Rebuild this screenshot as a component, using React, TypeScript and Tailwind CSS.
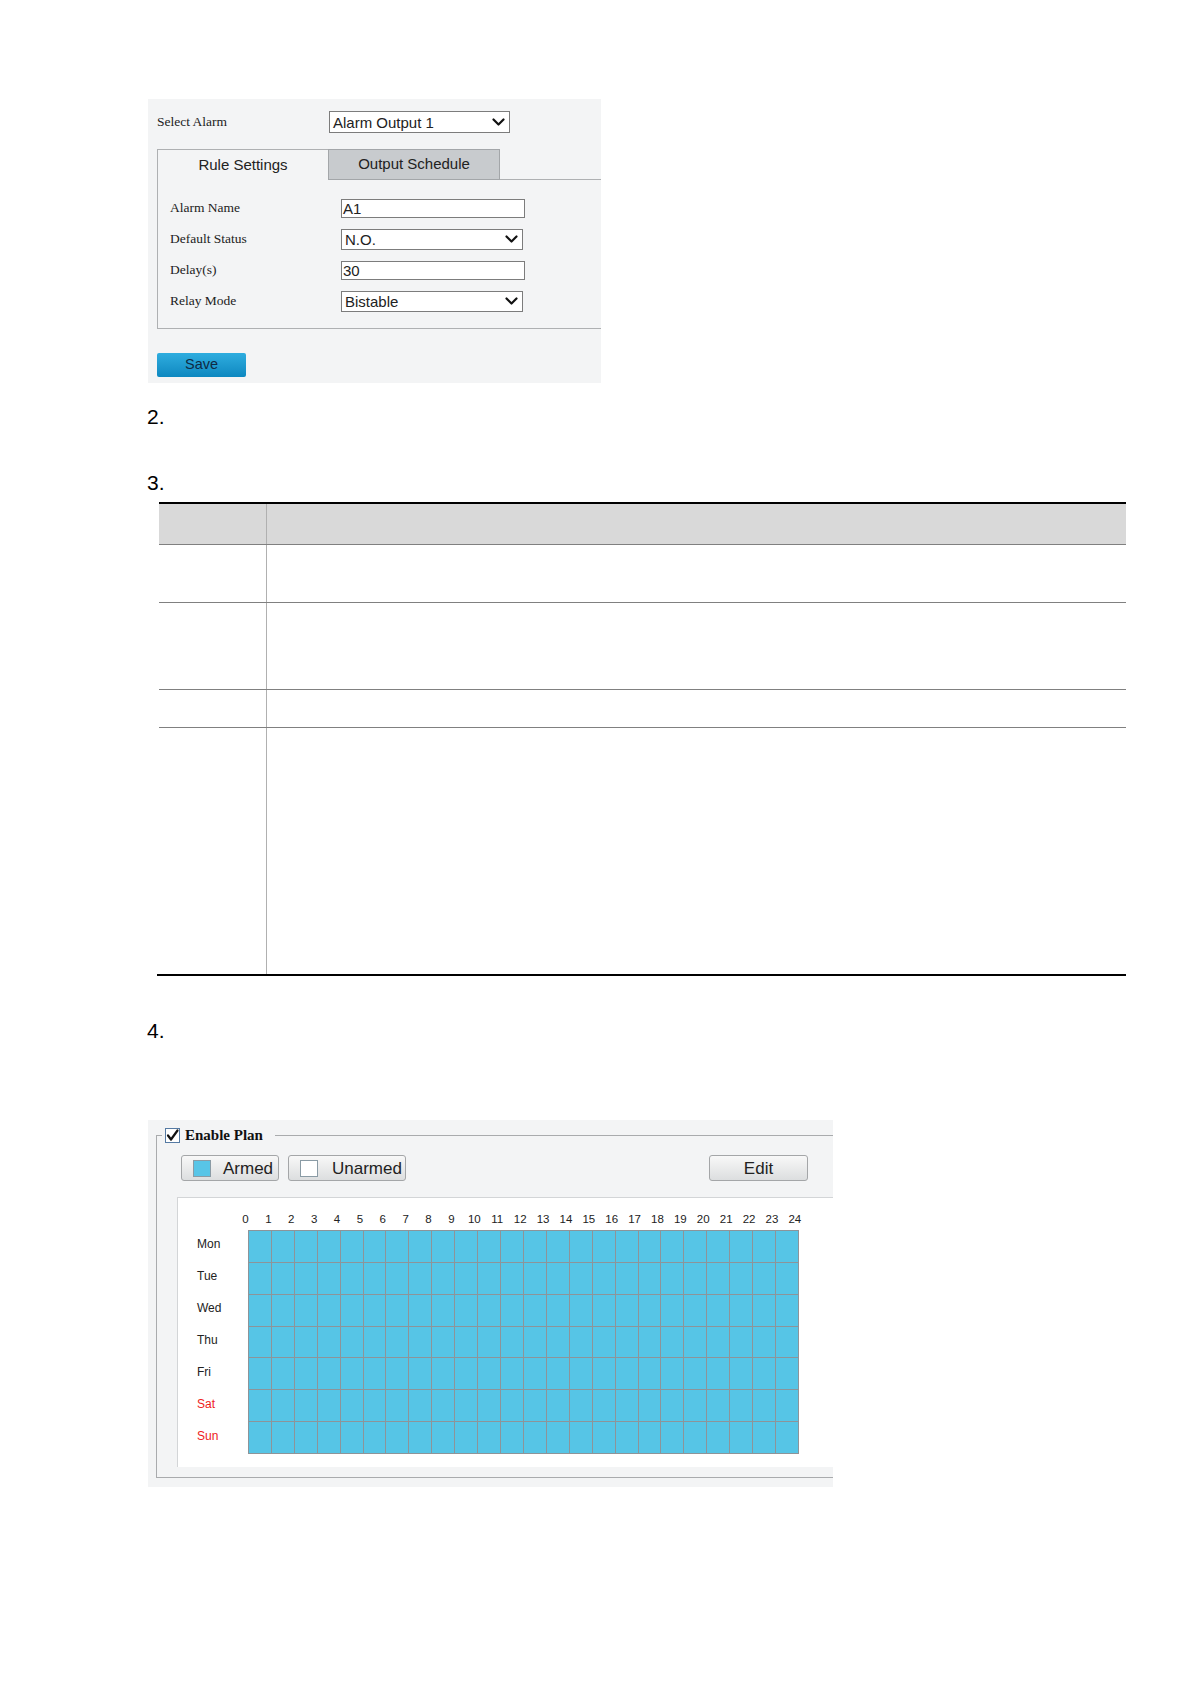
import React from 'react'

const hours = Array.from({ length: 25 }, (_, i) => i)
const days = [
  { name: 'Mon', weekend: false },
  { name: 'Tue', weekend: false },
  { name: 'Wed', weekend: false },
  { name: 'Thu', weekend: false },
  { name: 'Fri', weekend: false },
  { name: 'Sat', weekend: true },
  { name: 'Sun', weekend: true },
]

function Chevron() {
  return (
    <svg width="13" height="9" viewBox="0 0 13 9" className="shrink-0">
      <path d="M1.5 1.5 L6.5 6.5 L11.5 1.5" fill="none" stroke="#111" strokeWidth="2.2" strokeLinecap="round" strokeLinejoin="round" />
    </svg>
  )
}

function SelectBox({ value, w, h }: { value: string; w: string; h: string }) {
  return (
    <div className={`${w} ${h} flex items-center justify-between bg-white border border-[#7c7c7c] pl-[3px] pr-[4px]`}>
      <span className="text-[15px] leading-none text-[#222]">{value}</span>
      <Chevron />
    </div>
  )
}

function TextBox({ value }: { value: string }) {
  return (
    <div className="w-[184px] h-[19px] flex items-center bg-white border border-[#7c7c7c] pl-[1px]">
      <span className="text-[15px] leading-none text-[#222]">{value}</span>
    </div>
  )
}

function FormRow({ label, children }: { label: string; children: React.ReactNode }) {
  return (
    <div className="h-[31px] flex items-center">
      <span className="w-[171px] font-['Liberation_Serif',serif] text-[13.5px] text-[#222]">{label}</span>
      {children}
    </div>
  )
}

function AlarmPanel() {
  return (
    <div className="ml-[148px] w-[453px] h-[284px] bg-[#f3f4f5] pt-[12px] pl-[9px]">
      <div className="h-[22px] flex items-center">
        <span className="w-[172px] font-['Liberation_Serif',serif] text-[13.5px] text-[#222]">Select Alarm</span>
        <SelectBox value="Alarm Output 1" w="w-[181px]" h="h-[22px]" />
      </div>

      <div className="mt-[16px] w-[444px] flex h-[31px]">
        <div className="w-[171px] border-l border-t border-[#aeb0b2] flex items-center justify-center text-[15px] text-[#222]">
          Rule Settings
        </div>
        <div className="w-[172px] bg-[#c8cbce] border border-[#a3a6a9] flex items-center justify-center text-[15px] text-[#222]">
          Output Schedule
        </div>
        <div className="flex-1 border-b border-[#aeb0b2]" />
      </div>
      <div className="w-[444px] h-[149px] border-l border-b border-[#aeb0b2] pl-[12px] pt-[13px]">
        <FormRow label="Alarm Name">
          <TextBox value="A1" />
        </FormRow>
        <FormRow label="Default Status">
          <SelectBox value="N.O." w="w-[182px]" h="h-[21px]" />
        </FormRow>
        <FormRow label="Delay(s)">
          <TextBox value="30" />
        </FormRow>
        <FormRow label="Relay Mode">
          <SelectBox value="Bistable" w="w-[182px]" h="h-[21px]" />
        </FormRow>
      </div>

      <button className="mt-[24px] w-[89px] h-[24px] rounded-[2px] bg-gradient-to-b from-[#2eaddf] to-[#0c88c0] text-[14.5px] text-[#0f2a44] flex items-center justify-center">
        Save
      </button>
    </div>
  )
}

function StepNumber({ n, className }: { n: number; className: string }) {
  return <p className={`ml-[147px] text-[21px] leading-[24px] text-black ${className}`}>{n}.</p>
}

function ParamTable() {
  const rows = ['h-[58px]', 'h-[87px]', 'h-[38px]']
  return (
    <div className="mt-[7px]">
      <div className="ml-[159px] w-[967px] border-t-2 border-black">
        <div className="flex h-[41px] bg-[#d9d9d9] border-b border-[#808080]">
          <div className="w-[108px] border-r border-[#b0b0b0]" />
          <div className="flex-1" />
        </div>
        {rows.map((h, i) => (
          <div key={i} className={`flex ${h} border-b border-[#808080]`}>
            <div className="w-[108px] border-r border-[#b0b0b0]" />
            <div className="flex-1" />
          </div>
        ))}
        <div className="flex h-[246px]">
          <div className="w-[108px] border-r border-[#b0b0b0]" />
          <div className="flex-1" />
        </div>
      </div>
      <div className="ml-[157px] w-[969px] h-[2px] bg-black" />
    </div>
  )
}

function ToolButton({ w, children, className = '' }: { w: string; children: React.ReactNode; className?: string }) {
  return (
    <div
      className={`${w} h-[26px] rounded-[3px] border border-[#a4a6a8] bg-gradient-to-b from-[#f8f8f8] to-[#dcdedf] flex items-center text-[17px] leading-none text-[#222] ${className}`}
    >
      {children}
    </div>
  )
}

function Checkbox() {
  return (
    <svg width="15" height="15" viewBox="0 0 15 15">
      <rect x="0.5" y="0.5" width="14" height="14" fill="#fff" stroke="#557aa3" />
      <path d="M3 7.5 L6 11.5 L12.5 2.5" fill="none" stroke="#111" strokeWidth="2.2" strokeLinecap="round" strokeLinejoin="round" />
    </svg>
  )
}

function PlanPanel() {
  return (
    <div className="mt-[77px] ml-[148px] w-[685px] h-[367px] bg-[#f3f4f5] pt-[15px] pl-[8px]">
      <div className="relative h-[343px] border-l border-t border-b border-[#a9abad] pt-[19px]">
        <div className="absolute -top-[9px] left-[5px] flex items-center gap-[5px] bg-[#f3f4f5] pl-[3px] pr-[12px]">
          <Checkbox />
          <span className="font-['Liberation_Serif',serif] font-bold text-[15px] leading-[17px] text-[#111]">Enable Plan</span>
        </div>

        <div className="flex pl-[24px] pr-[25px]">
          <ToolButton w="w-[98px]" className="pl-[11px] gap-[12px]">
            <span className="w-[18px] h-[17px] bg-[#58c5e7] border border-[#8a9ba5]" />
            <span>Armed</span>
          </ToolButton>
          <ToolButton w="w-[118px]" className="ml-[9px] pl-[11px] gap-[14px]">
            <span className="w-[18px] h-[17px] bg-white border border-[#8a9ba5]" />
            <span>Unarmed</span>
          </ToolButton>
          <ToolButton w="w-[99px]" className="ml-auto justify-center">
            Edit
          </ToolButton>
        </div>

        <div className="mt-[16px] ml-[20px] h-[270px] bg-white border-t border-l border-[#d3d5d7] pt-[15px]">
          <div className="ml-[56px] flex">
            {hours.map(h => (
              <span key={h} className="w-[22.9px] text-center text-[11.5px] leading-[13px] text-[#222]">
                {h}
              </span>
            ))}
          </div>
          <div className="mt-[4px] flex">
            <div className="w-[70px] pl-[19px] flex flex-col -mt-[2px]">
              {days.map(d => (
                <span
                  key={d.name}
                  className={`h-[32px] flex items-center text-[12px] ${d.weekend ? 'text-[#ee1c1c]' : 'text-[#222]'}`}
                >
                  {d.name}
                </span>
              ))}
            </div>
            <div className="w-[551px] h-[224px] grid grid-cols-[repeat(24,1fr)] grid-rows-[repeat(7,1fr)] gap-px p-px bg-[#8d9499]">
              {Array.from({ length: 24 * 7 }, (_, i) => (
                <div key={i} className="bg-[#56c5e6]" />
              ))}
            </div>
          </div>
        </div>
      </div>
    </div>
  )
}

export default function App() {
  return (
    <div className="w-[1191px] h-[1684px] bg-white pt-[99px] font-['Liberation_Sans',Arial,sans-serif]">
      <AlarmPanel />
      <StepNumber n={2} className="mt-[22px]" />
      <StepNumber n={3} className="mt-[42px]" />
      <ParamTable />
      <StepNumber n={4} className="mt-[43px]" />
      <PlanPanel />
    </div>
  )
}
